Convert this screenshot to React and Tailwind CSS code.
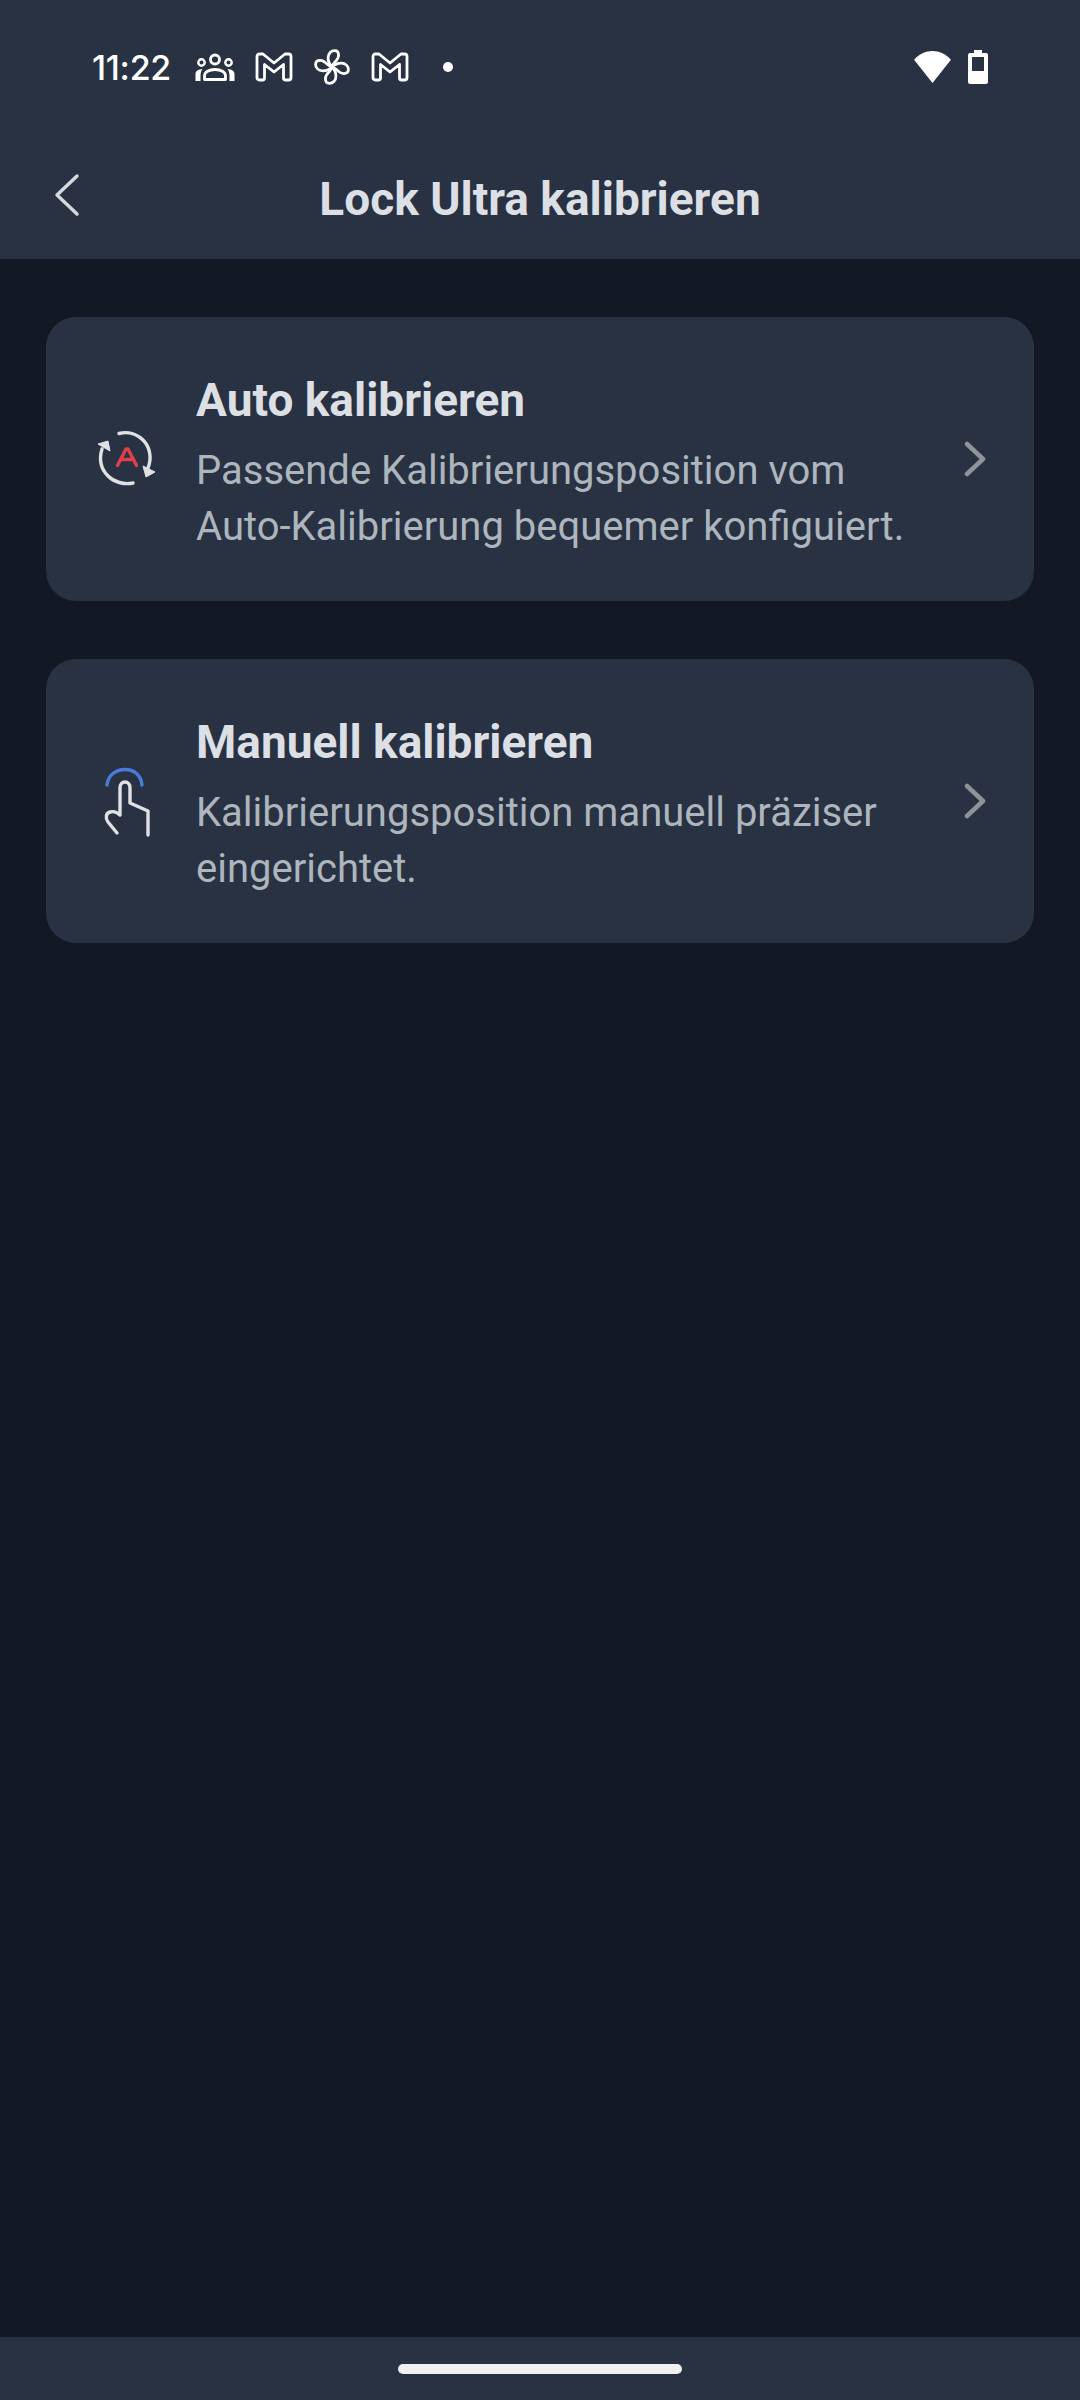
import React from "react";

function Chevron() {
  return (
    <svg width="22" height="36" viewBox="0 0 22 36" fill="none" className="shrink-0">
      <path d="M3 3 L19 18 L3 33" stroke="#8f949b" strokeWidth="4.500" strokeLinecap="round" strokeLinejoin="round" />
    </svg>
  );
}

function Gmail() {
  return (
    <svg width="38" height="30" viewBox="0 0 38 30" fill="none">
      <path d="M2 4.500 Q2 2 4.500 2 L8 2 L19 11 L30 2 L33.500 2 Q36 2 36 4.500 L36 25.500 Q36 28 33.500 28 L30.500 28 Q28.500 28 28.500 26 L28.500 12.500 L19 20 L9.500 12.500 L9.500 26 Q9.500 28 7.500 28 L4.500 28 Q2 28 2 25.500 Z" stroke="#fff" strokeWidth="2.800" strokeLinejoin="round" />
    </svg>
  );
}

function People() {
  return (
    <svg width="40" height="28" viewBox="0 0 40 28" fill="none">
      <circle cx="20" cy="6.500" r="4.500" stroke="#fff" strokeWidth="2.800" />
      <circle cx="6.500" cy="9.500" r="3.200" stroke="#fff" strokeWidth="2.400" />
      <circle cx="33.500" cy="9.500" r="3.200" stroke="#fff" strokeWidth="2.400" />
      <path d="M9.500 26.500 L9.500 23 C9.500 19 14 16.500 20 16.500 C26 16.500 30.500 19 30.500 23 L30.500 26.500 Z" stroke="#fff" strokeWidth="2.800" strokeLinejoin="round" />
      <path d="M0.500 28 L0.500 21 C0.500 18 3 16.500 7.500 16 C6 18 5.500 20.500 5.500 23 L5.500 28 Z" fill="#fff" />
      <path d="M39.500 28 L39.500 21 C39.500 18 37 16.500 32.500 16 C34 18 34.500 20.500 34.500 23 L34.500 28 Z" fill="#fff" />
    </svg>
  );
}

function Fan() {
  const blade = "M0 0 C-8 -8 -12 -16 -12 -28 C-12 -42 -2 -50 8 -50 C16 -50 20 -44 20 -36 C20 -26 14 -20 8 -14 C5 -10 2 -5 0 0 Z";
  return (
    <svg width="38" height="38" viewBox="-58 -58 116 116" fill="none">
      <g stroke="#fff" strokeWidth="8.500" strokeLinejoin="round">
        <path d={blade} />
        <path d={blade} transform="rotate(90)" />
        <path d={blade} transform="rotate(180)" />
        <path d={blade} transform="rotate(270)" />
      </g>
    </svg>
  );
}

function AutoIcon() {
  return (
    <svg width="100" height="100" viewBox="0 0 100 100" fill="none" className="ml-[34px] shrink-0">
      <path d="M39 24.500 C48 22 57 25 63 31 C70 38 72 49 68 59" stroke="#dfe1e5" strokeWidth="3.400" strokeLinecap="round" />
      <path d="M53 74 C44 76 34 73 28 67 C21 60 19 50 22 40" stroke="#dfe1e5" strokeWidth="3.400" strokeLinecap="round" />
      <path d="M63 57 L75 63 L66 68 Z" fill="#dfe1e5" stroke="#dfe1e5" strokeWidth="1" strokeLinejoin="round" />
      <path d="M18 35 L28 32 L30 42 Z" fill="#dfe1e5" stroke="#dfe1e5" strokeWidth="1" strokeLinejoin="round" />
      <path d="M37.500 56.500 L46 40 L48 40 L56.500 56.500 M40.500 50.500 L53.500 50.500" stroke="#e0404a" strokeWidth="3.400" strokeLinecap="round" strokeLinejoin="round" />
    </svg>
  );
}

function TouchIcon() {
  return (
    <svg width="80" height="100" viewBox="0 0 80 100" fill="none" className="ml-[44px] shrink-0">
      <path d="M17 34 C18 24 26 18.500 35 18.500 C44 18.500 51 24 52 34" stroke="#4a7bdc" strokeWidth="3.400" strokeLinecap="round" />
      <path d="M27 82 L18 71 C15 67 16 62 20 61 C24 60 27 61 30 64 L30 37 C30 29 40 29 40 37 L40 52 L58 60 L58 84" stroke="#dfe1e5" strokeWidth="3.400" strokeLinecap="round" strokeLinejoin="round" />
    </svg>
  );
}

function Card({ icon, title, lines }) {
  return (
    <div className="flex h-[284px] items-center rounded-[30px] bg-[#283243]">
      <div className="flex w-[150px] shrink-0 items-center">{icon}</div>
      <div className="min-w-0 flex-1 pt-[8px]">
        <div className="text-[46px] font-bold leading-[56px] text-[#dcdfe3]">{title}</div>
        <div className="mt-[15px] text-[40px] leading-[56px] text-[#adb5bd]">
          {lines.map((l) => (
            <div key={l} className="whitespace-nowrap">{l}</div>
          ))}
        </div>
      </div>
      <div className="mr-[48px] shrink-0"><Chevron /></div>
    </div>
  );
}

export default function App() {
  return (
    <div className="flex h-[2400px] w-[1080px] flex-col overflow-hidden bg-[#121924] font-['Roboto',sans-serif]">
      <div className="h-[259px] shrink-0 bg-[#283243]">
        <div className="flex h-[134px] items-center justify-between pl-[92px] pr-[92px]">
          <div className="flex items-center">
            <span className="w-[79px] font-['Inter',sans-serif] text-[34px] font-medium tracking-[-0.3px] text-white">11:22</span>
            <div className="ml-[24px] flex items-center gap-[20px]">
              <People />
              <Gmail />
              <Fan />
              <Gmail />
            </div>
            <span className="ml-[34px] h-[10px] w-[10px] rounded-full bg-white" />
          </div>
          <div className="flex items-center gap-[16px]">
            <svg width="39" height="33" viewBox="0 0 40 34"><path d="M1 9 C6 3 13 0 20 0 C27 0 34 3 39 9 L20 33 Z" fill="#fff" /></svg>
            <svg width="20" height="34" viewBox="0 0 20 34"><path fillRule="evenodd" d="M6 0 H14 V3 H18 Q20 3 20 5 V32 Q20 34 18 34 H2 Q0 34 0 32 V5 Q0 3 2 3 H6 Z M4 7 V21 H16 V7 Z" fill="#fff" /></svg>
          </div>
        </div>
        <div className="relative mt-[35px] flex h-[60px] items-center justify-center">
          <svg width="26" height="44" viewBox="0 0 26 44" fill="none" className="absolute left-[54px] top-[4px]">
            <path d="M23 3 L3 22 L23 41" stroke="#d5d8dc" strokeWidth="3.500" strokeLinecap="round" strokeLinejoin="round" />
          </svg>
          <span className="text-[46px] font-bold text-[#dcdfe3]">Lock Ultra kalibrieren</span>
        </div>
      </div>
      <div className="flex flex-1 flex-col gap-[58px] px-[46px] pt-[58px]">
        <Card icon={<AutoIcon />} title="Auto kalibrieren" lines={["Passende Kalibrierungsposition vom", "Auto-Kalibrierung bequemer konfiguiert."]} />
        <Card icon={<TouchIcon />} title="Manuell kalibrieren" lines={["Kalibrierungsposition manuell präziser", "eingerichtet."]} />
      </div>
      <div className="flex h-[63px] shrink-0 justify-center bg-[#283243] pt-[27px]">
        <div className="h-[10px] w-[284px] rounded-full bg-[#f0f0f3]" />
      </div>
    </div>
  );
}
